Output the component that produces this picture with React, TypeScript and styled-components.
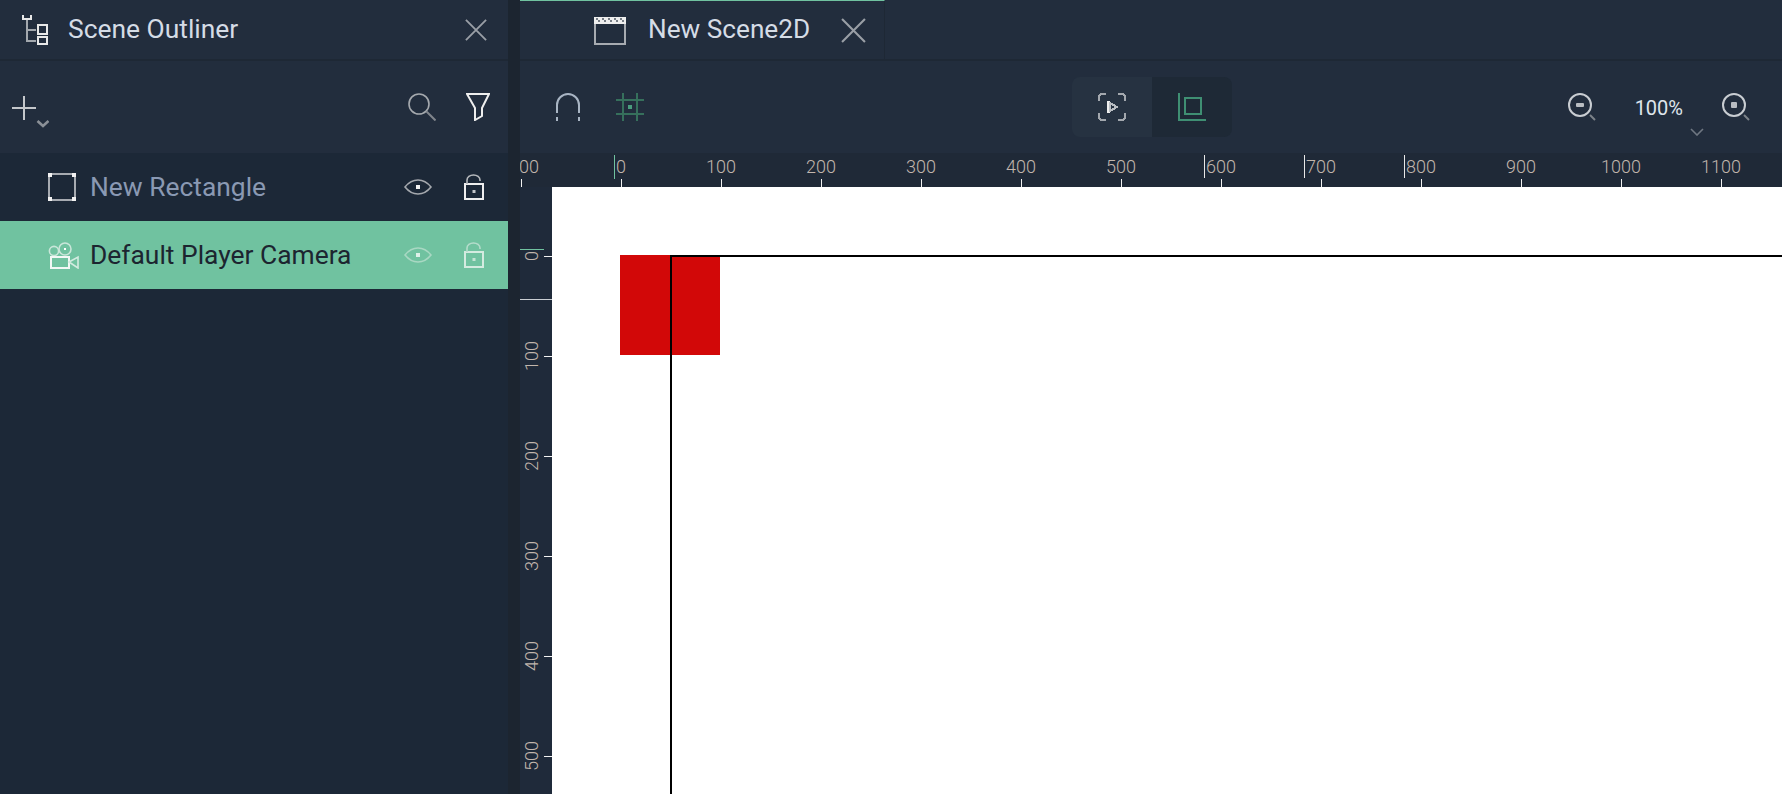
import styled, { createGlobalStyle } from "styled-components";

const colors = {
  panel: "#222d3d",
  list: "#1c2837",
  gutter: "#1c2530",
  ruler: "#1f2937",
  rulerSide: "#1f2a3a",
  line: "#1e2835",
  green: "#70c2a0",
  accent: "#3f8f73",
  label: "#c2b6ad",
};

const GlobalStyle = createGlobalStyle`
  html, body {
    margin: 0;
    padding: 0;
    background: ${colors.gutter};
    font-family: Roboto, "Liberation Sans", sans-serif;
  }
`;

const Page = styled.div`
  width: 1782px;
  height: 794px;
  display: flex;
  overflow: hidden;
`;

const Outliner = styled.aside`
  width: 508px;
  flex-shrink: 0;
  display: flex;
  flex-direction: column;
  background: ${colors.list};
`;

const PanelHeader = styled.header`
  height: 59px;
  display: flex;
  align-items: center;
  padding: 0 21px 0 22px;
  background: ${colors.panel};
  border-bottom: 2px solid ${colors.line};
`;

const HeaderTitle = styled.span`
  margin: -2px 0 0 20px;
  flex: 1;
  font-size: 26.4px;
  color: #d5dce6;
`;

const OutlinerTools = styled.div`
  height: 92px;
  display: flex;
  align-items: center;
  padding: 0 18px 0 12px;
  background: ${colors.panel};
`;

const ToolSpacer = styled.div`
  flex: 1;
`;

const Row = styled.div<{ $selected?: boolean }>`
  height: 68px;
  display: flex;
  align-items: center;
  padding: 0 24px 0 48px;
  background: ${(p) => (p.$selected ? colors.green : "transparent")};
`;

const RowName = styled.span<{ $selected?: boolean }>`
  flex: 1;
  margin-left: ${(p) => (p.$selected ? "9px" : "14px")};
  font-size: 26.4px;
  color: ${(p) => (p.$selected ? "#1c2530" : "#8a99b3")};
`;

const RowIcons = styled.div`
  display: flex;
  align-items: center;
  gap: 32px;
`;

const Main = styled.main`
  width: 1262px;
  margin-left: 12px;
  display: flex;
  flex-direction: column;
`;

const TabBar = styled.div`
  height: 59px;
  display: flex;
  background: ${colors.panel};
  border-bottom: 2px solid ${colors.line};
`;

const Tab = styled.div`
  width: 365px;
  box-sizing: border-box;
  display: flex;
  align-items: center;
  padding-left: 74px;
  border-top: 1px solid ${colors.green};
  border-right: 1px solid ${colors.line};
`;

const TabTitle = styled.span`
  margin: -2px 31px 0 22px;
  font-size: 26.2px;
  color: #d5dce6;
`;

const Toolbar = styled.div`
  height: 92px;
  display: grid;
  grid-template-columns: 552px 160px 1fr;
  align-items: center;
  background: ${colors.panel};
`;

const ToolGroup = styled.div`
  display: flex;
  align-items: center;
  padding-left: 36px;
  gap: 36px;
`;

const ViewSwitch = styled.div`
  width: 160px;
  height: 60px;
  display: flex;
  border-radius: 8px;
  overflow: hidden;
`;

const ViewButton = styled.div<{ $active?: boolean }>`
  flex: 1;
  display: flex;
  align-items: center;
  justify-content: center;
  background: ${(p) => (p.$active ? "#1e2936" : "#263241")};
`;

const ZoomGroup = styled.div`
  position: relative;
  display: flex;
  align-items: center;
  justify-content: flex-end;
  padding-right: 32px;
`;

const ZoomValue = styled.span`
  margin: 2px 39px 0 39px;
  font-size: 20px;
  color: #dfe5ec;
`;

const ZoomCaret = styled.svg`
  position: absolute;
  right: 78px;
  top: 35px;
`;

const HRuler = styled.div`
  position: relative;
  height: 34px;
  display: flex;
  padding-left: 1px;
  background: ${colors.ruler};
  overflow: hidden;
`;

const HCell = styled.div`
  position: relative;
  width: 100px;
  flex-shrink: 0;
  &::after {
    content: "";
    position: absolute;
    left: 0;
    bottom: 0;
    width: 1px;
    height: 8px;
    background: #f2f2f2;
  }
`;

const HLabel = styled.span<{ $edge?: boolean }>`
  position: absolute;
  top: 3px;
  left: ${(p) => (p.$edge ? "-2px" : "0")};
  transform: ${(p) => (p.$edge ? "none" : "translateX(-50%)")};
  font-size: 18px;
  font-weight: 300;
  line-height: 22px;
  color: ${colors.label};
`;

const HMark = styled.div<{ $x: number; $green?: boolean }>`
  position: absolute;
  left: ${(p) => p.$x}px;
  top: 2px;
  width: 1px;
  height: ${(p) => (p.$green ? 24 : 23)}px;
  background: ${(p) => (p.$green ? colors.green : "#e8e8e8")};
`;

const Workspace = styled.div`
  flex: 1;
  display: flex;
  min-height: 0;
`;

const VRuler = styled.div`
  position: relative;
  width: 32px;
  flex-shrink: 0;
  padding-top: 69px;
  box-sizing: border-box;
  background: ${colors.rulerSide};
  overflow: hidden;
`;

const VCell = styled.div`
  position: relative;
  height: 100px;
  &::after {
    content: "";
    position: absolute;
    right: 0;
    top: 0;
    width: 8px;
    height: 1px;
    background: #f2f2f2;
  }
`;

const VLabel = styled.span`
  position: absolute;
  left: 4px;
  top: 0;
  writing-mode: vertical-rl;
  transform: translateY(-50%) rotate(180deg);
  font-size: 18px;
  font-weight: 300;
  line-height: 16px;
  color: ${colors.label};
`;

const VMark = styled.div<{ $y: number; $green?: boolean }>`
  position: absolute;
  left: 0;
  top: ${(p) => p.$y}px;
  height: 1px;
  width: ${(p) => (p.$green ? 24 : 32)}px;
  background: ${(p) => (p.$green ? colors.green : "#c9ced3")};
`;

const Canvas = styled.div`
  position: relative;
  flex: 1;
  background: #ffffff;
  overflow: hidden;
`;

const RedRect = styled.div`
  position: absolute;
  left: 68px;
  top: 68px;
  width: 100px;
  height: 100px;
  background: #d20808;
`;

const CameraFrame = styled.div`
  position: absolute;
  left: 118px;
  top: 68px;
  right: -4px;
  bottom: -4px;
  border-left: 2px solid #000;
  border-top: 2px solid #000;
`;

const HierarchyIcon = () => (
  <svg width="26" height="30" viewBox="0 0 26 30" fill="none" shapeRendering="crispEdges">
    <path d="M1 0v4h8V0" stroke="#e8e8e8" strokeWidth="2" />
    <path d="M5 5v21h9M5 15h9" stroke="#a3a8ae" strokeWidth="2" />
    <rect x="16" y="10" width="9" height="9" stroke="#e8e8e8" strokeWidth="2" />
    <rect x="16" y="22" width="9" height="7" stroke="#e8e8e8" strokeWidth="2" />
  </svg>
);

const CloseIcon = ({ size }: { size: number }) => (
  <svg width={size} height={size} viewBox="0 0 24 24" fill="none">
    <path d="M1 1l22 22M23 1L1 23" stroke="#9a9fa6" strokeWidth="2" />
  </svg>
);

const PlusIcon = () => (
  <svg width="37" height="33" viewBox="0 0 37 33" fill="none" style={{ marginTop: 10 }}>
    <path d="M12 0v24M0 12h24" stroke="#c4c7cb" strokeWidth="2" />
    <path d="M25.500 25l5.500 5 5.500-5" stroke="#8b9097" strokeWidth="2.6" />
  </svg>
);

const SearchIcon = () => (
  <svg width="28" height="28" viewBox="0 0 28 28" fill="none">
    <circle cx="11" cy="11" r="10" stroke="#a5a9ae" strokeWidth="1.6" />
    <path d="M18.500 18.500L27.500 27.500" stroke="#80858c" strokeWidth="2" />
  </svg>
);

const FilterIcon = () => (
  <svg width="24" height="28" viewBox="0 0 24 28" fill="none" style={{ marginLeft: 30 }}>
    <path d="M1 1h22l-7 14v8l-7 4V15z" stroke="#eeeeee" strokeWidth="2" />
  </svg>
);

const RectangleIcon = () => (
  <svg width="28" height="28" viewBox="0 0 28 28" fill="none" shapeRendering="crispEdges">
    <rect x="1" y="1" width="26" height="26" stroke="#a7abb1" strokeWidth="2" />
    <path d="M0 0h4v4H0zM24 0h4v4h-4zM0 24h4v4H0zM24 24h4v4h-4z" fill="#f2f2f2" />
  </svg>
);

const CameraIcon = () => (
  <svg width="31" height="27" viewBox="0 0 31 27" fill="none" style={{ marginRight: 2 }}>
    <circle cx="6" cy="9" r="4.600" stroke="#c9e6d9" strokeWidth="1.6" />
    <circle cx="17" cy="7" r="6" stroke="#c9e6d9" strokeWidth="1.6" />
    <rect x="16" y="6" width="2" height="2" fill="#ffffff" />
    <rect x="3" y="15" width="18" height="11" stroke="#f2f8f5" strokeWidth="2" shapeRendering="crispEdges" />
    <path d="M21 20l9-5v11z" stroke="#d3ebe0" strokeWidth="1.6" />
  </svg>
);

const EyeIcon = ({ onGreen }: { onGreen?: boolean }) => (
  <svg width="28" height="16" viewBox="0 0 28 16" fill="none">
    <path
      d="M1 8C5 3 9 1 14 1s9 2 13 7c-4 5-8 7-13 7S5 13 1 8z"
      stroke={onGreen ? "#a9d8c3" : "#a5a9ae"}
      strokeWidth="1.6"
    />
    <rect x="12" y="6" width="4" height="4" fill={onGreen ? "#dff1e9" : "#f2f2f2"} />
  </svg>
);

const LockIcon = ({ onGreen }: { onGreen?: boolean }) => (
  <svg width="20" height="26" viewBox="0 0 20 26" fill="none">
    <rect
      x="1"
      y="10"
      width="18"
      height="15"
      stroke={onGreen ? "#d4ebe0" : "#eeeeee"}
      strokeWidth="2"
      shapeRendering="crispEdges"
    />
    <path d="M3 10V6a6.500 5 0 0 1 13 0v1" stroke={onGreen ? "#b4dccb" : "#b5b8bc"} strokeWidth="1.6" />
    <rect x="8.500" y="16" width="3" height="3" fill={onGreen ? "#c6e4d6" : "#c4c7cb"} />
  </svg>
);

const ClapperIcon = () => (
  <svg width="32" height="29" viewBox="0 0 32 29" fill="none" shapeRendering="crispEdges">
    <rect x="1" y="2" width="30" height="26" stroke="#a7abb1" strokeWidth="2" />
    <rect x="0" y="1" width="32" height="7" fill="#eeeeee" />
    <path d="M2 2h2v2H2zM4 4h2v2H4zM8 2h2v2H8zM10 4h2v2h-2zM14 2h2v2h-2zM16 4h2v2h-2zM20 2h2v2h-2zM22 4h2v2h-2zM26 2h2v2h-2zM28 4h2v2h-2z" fill="#777d85" />
  </svg>
);

const MagnetIcon = () => (
  <svg width="24" height="28" viewBox="0 0 24 28" fill="none">
    <path d="M1 20V12a11 11 0 0 1 22 0v8" stroke="#a9b5c4" strokeWidth="2" />
    <path d="M1 24v4M23 24v4" stroke="#a9b5c4" strokeWidth="2" />
  </svg>
);

const GridIcon = () => (
  <svg width="28" height="28" viewBox="0 0 28 28" fill="none" shapeRendering="crispEdges">
    <path d="M7 0v28M21 0v28M0 7h28M0 21h28" stroke="#36705c" strokeWidth="2" />
    <rect x="12" y="12" width="4" height="4" fill="#4a9d7e" />
  </svg>
);

const PlayFrameIcon = () => (
  <svg width="28" height="28" viewBox="0 0 28 28" fill="none" shapeRendering="crispEdges">
    <path d="M1 8V3l2-2h5M20 1h5l2 2v5M1 20v5l2 2h5M20 27h5l2-2v-5" stroke="#a3a8ae" strokeWidth="2" />
    <path d="M10 8v12" stroke="#eeeeee" strokeWidth="3" />
    <path d="M12 10l7 4-7 4z" stroke="#b9bdc2" strokeWidth="2" />
  </svg>
);

const FrameIcon = () => (
  <svg width="28" height="29" viewBox="0 0 28 29" fill="none" shapeRendering="crispEdges">
    <path d="M1 0v27h27" stroke="#3f8f73" strokeWidth="2" />
    <rect x="7" y="5" width="16" height="16" stroke="#3f8f73" strokeWidth="2" />
  </svg>
);

const ZoomIcon = ({ plus }: { plus?: boolean }) => (
  <svg width="28" height="28" viewBox="0 0 28 28" fill="none">
    <circle cx="12" cy="12" r="11" stroke="#c9cdd2" strokeWidth="2" />
    <path d="M22 22l5 5" stroke="#7c8289" strokeWidth="2" />
    {plus ? (
      <rect x="9" y="9" width="6" height="6" rx="1" fill="#b9bdc2" />
    ) : (
      <rect x="8" y="10" width="8" height="4" rx="1" fill="#b9bdc2" />
    )}
  </svg>
);

const hTicks = [-100, 0, 100, 200, 300, 400, 500, 600, 700, 800, 900, 1000, 1100];
const vTicks = [0, 100, 200, 300, 400, 500];

const App = () => {
  return (
    <Page>
      <GlobalStyle />
      <Outliner>
        <PanelHeader>
          <HierarchyIcon />
          <HeaderTitle>Scene Outliner</HeaderTitle>
          <CloseIcon size={22} />
        </PanelHeader>
        <OutlinerTools>
          <PlusIcon />
          <ToolSpacer />
          <SearchIcon />
          <FilterIcon />
        </OutlinerTools>
        <Row>
          <RectangleIcon />
          <RowName>New Rectangle</RowName>
          <RowIcons>
            <EyeIcon />
            <LockIcon />
          </RowIcons>
        </Row>
        <Row $selected>
          <CameraIcon />
          <RowName $selected>Default Player Camera</RowName>
          <RowIcons>
            <EyeIcon onGreen />
            <LockIcon onGreen />
          </RowIcons>
        </Row>
      </Outliner>
      <Main>
        <TabBar>
          <Tab>
            <ClapperIcon />
            <TabTitle>New Scene2D</TabTitle>
            <CloseIcon size={25} />
          </Tab>
        </TabBar>
        <Toolbar>
          <ToolGroup>
            <MagnetIcon />
            <GridIcon />
          </ToolGroup>
          <ViewSwitch>
            <ViewButton>
              <PlayFrameIcon />
            </ViewButton>
            <ViewButton $active>
              <FrameIcon />
            </ViewButton>
          </ViewSwitch>
          <ZoomGroup>
            <ZoomIcon />
            <ZoomValue>100%</ZoomValue>
            <ZoomCaret width="14" height="8" viewBox="0 0 14 8" fill="none">
              <path d="M1 1l6 6 6-6" stroke="#6f7782" strokeWidth="1.6" />
            </ZoomCaret>
            <ZoomIcon plus />
          </ZoomGroup>
        </Toolbar>
        <HRuler>
          {hTicks.map((tick) => (
            <HCell key={tick}>
              {tick < 0 ? <HLabel $edge>00</HLabel> : <HLabel>{tick}</HLabel>}
            </HCell>
          ))}
          <HMark $x={94} $green />
          <HMark $x={684} />
          <HMark $x={784} />
          <HMark $x={884} />
        </HRuler>
        <Workspace>
          <VRuler>
            {vTicks.map((tick) => (
              <VCell key={tick}>
                <VLabel>{tick}</VLabel>
              </VCell>
            ))}
            <VMark $y={62} $green />
            <VMark $y={112} />
          </VRuler>
          <Canvas>
            <RedRect />
            <CameraFrame />
          </Canvas>
        </Workspace>
      </Main>
    </Page>
  );
};

export default App;
